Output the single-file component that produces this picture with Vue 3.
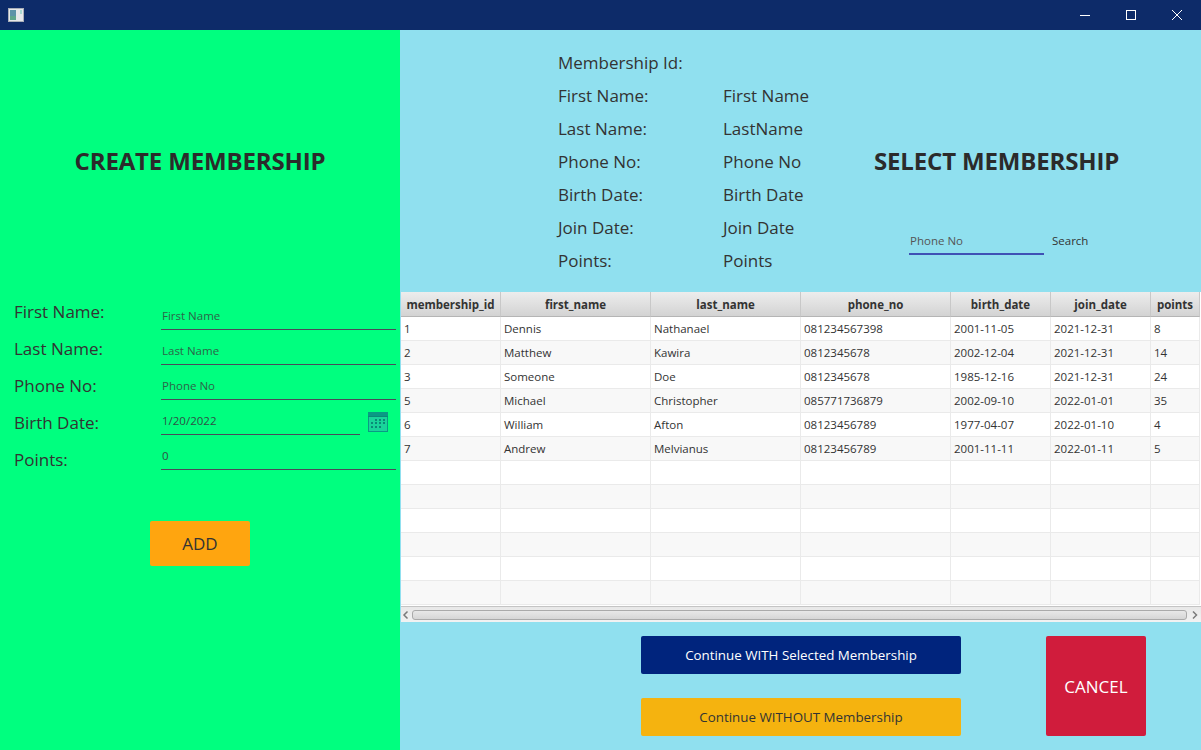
<template>
  <div class="window">
    <div class="titlebar">
      <svg class="app-icon" width="16" height="14" viewBox="0 0 16 14">
        <rect x="0.5" y="0.5" width="15" height="13" fill="#e6e8ea" stroke="#a9afb8" />
        <rect x="2" y="2" width="6" height="10" fill="#5d93a8" />
        <rect x="2" y="8" width="6" height="4" fill="#5fa58c" />
        <rect x="12" y="2" width="2" height="4" fill="#a8d8d0" />
      </svg>
      <div class="win-controls">
        <svg width="12" height="12" viewBox="0 0 12 12"><path d="M1 6.5H11" stroke="#fff" fill="none" /></svg>
        <svg width="12" height="12" viewBox="0 0 12 12"><rect x="1.5" y="1.5" width="9" height="9" stroke="#fff" fill="none" /></svg>
        <svg width="12" height="12" viewBox="0 0 12 12"><path d="M1 1L11 11M11 1L1 11" stroke="#fff" fill="none" /></svg>
      </div>
    </div>

    <div class="content">
      <section class="create">
        <h1 class="heading create-heading">CREATE MEMBERSHIP</h1>
        <div class="form">
          <div class="form-labels">
            <span v-for="l in formLabels" :key="l">{{ l }}</span>
          </div>
          <div class="form-inputs">
            <div v-for="f in formFields" :key="f.text" class="field-row">
              <div class="field" :class="{ prompt: f.prompt }">{{ f.text }}</div>
              <svg v-if="f.date" class="cal" width="20" height="20" viewBox="0 0 20 20">
                <rect x="0" y="0" width="20" height="20" fill="#0a9a84" />
                <rect x="1" y="5" width="18" height="14" fill="#19d49a" />
                <rect x="0" y="4" width="20" height="1" fill="#0a8a78" />
                <g fill="#0a8a78">
                  <rect x="7" y="7" width="2" height="2" /><rect x="11" y="7" width="2" height="2" /><rect x="15" y="7" width="2" height="2" />
                  <rect x="3" y="10" width="2" height="2" /><rect x="7" y="10" width="2" height="2" /><rect x="11" y="10" width="2" height="2" /><rect x="15" y="10" width="2" height="2" />
                  <rect x="3" y="14" width="2" height="2" /><rect x="7" y="14" width="2" height="2" /><rect x="11" y="14" width="2" height="2" />
                </g>
              </svg>
            </div>
          </div>
        </div>
        <button class="add-btn">ADD</button>
      </section>

      <section class="select">
        <div class="select-top">
          <div class="details">
            <template v-for="d in details" :key="d[0]">
              <span>{{ d[0] }}</span>
              <span>{{ d[1] }}</span>
            </template>
          </div>
          <div class="select-side">
            <h1 class="heading">SELECT MEMBERSHIP</h1>
            <div class="search">
              <div class="search-input">Phone No</div>
              <span class="search-btn">Search</span>
            </div>
          </div>
        </div>

        <div class="table-wrap">
          <table>
            <colgroup>
              <col v-for="c in columns" :key="c.name" :style="{ width: c.width + 'px' }" />
            </colgroup>
            <thead>
              <tr>
                <th v-for="c in columns" :key="c.name">{{ c.name }}</th>
              </tr>
            </thead>
            <tbody>
              <tr v-for="(r, i) in rows" :key="i">
                <td v-for="(v, j) in r" :key="j">{{ v }}</td>
              </tr>
            </tbody>
          </table>
          <div class="scrollbar">
            <svg width="11" height="14" viewBox="0 0 11 14"><path d="M6.5 3.5L3 7L6.5 10.5" stroke="#7a7a7a" stroke-width="1.5" fill="none" /></svg>
            <div class="thumb"></div>
            <svg width="14" height="14" viewBox="0 0 14 14"><path d="M6 3.5L9.5 7L6 10.5" stroke="#7a7a7a" stroke-width="1.5" fill="none" /></svg>
          </div>
        </div>

        <div class="actions">
          <div class="continue">
            <button class="btn-with">Continue WITH Selected Membership</button>
            <button class="btn-without">Continue WITHOUT Membership</button>
          </div>
          <button class="btn-cancel">CANCEL</button>
        </div>
      </section>
    </div>
  </div>
</template>

<script setup>
const formLabels = ["First Name:", "Last Name:", "Phone No:", "Birth Date:", "Points:"];
const formFields = [
  { text: "First Name", prompt: true },
  { text: "Last Name", prompt: true },
  { text: "Phone No", prompt: true },
  { text: "1/20/2022", date: true },
  { text: "0" },
];
const details = [
  ["Membership Id:", ""],
  ["First Name:", "First Name"],
  ["Last Name:", "LastName"],
  ["Phone No:", "Phone No"],
  ["Birth Date:", "Birth Date"],
  ["Join Date:", "Join Date"],
  ["Points:", "Points"],
];
const columns = [
  { name: "membership_id", width: 100 },
  { name: "first_name", width: 150 },
  { name: "last_name", width: 150 },
  { name: "phone_no", width: 150 },
  { name: "birth_date", width: 100 },
  { name: "join_date", width: 100 },
  { name: "points", width: 49 },
];
const filled = [
  ["1", "Dennis", "Nathanael", "081234567398", "2001-11-05", "2021-12-31", "8"],
  ["2", "Matthew", "Kawira", "0812345678", "2002-12-04", "2021-12-31", "14"],
  ["3", "Someone", "Doe", "0812345678", "1985-12-16", "2021-12-31", "24"],
  ["5", "Michael", "Christopher", "085771736879", "2002-09-10", "2022-01-01", "35"],
  ["6", "William", "Afton", "08123456789", "1977-04-07", "2022-01-10", "4"],
  ["7", "Andrew", "Melvianus", "08123456789", "2001-11-11", "2022-01-11", "5"],
];
const rows = [...filled, ...Array.from({ length: 6 }, () => Array(7).fill(""))];
</script>

<style>
html,
body {
  margin: 0;
}
</style>

<style scoped>
.window {
  width: 1201px;
  height: 750px;
  display: flex;
  flex-direction: column;
  overflow: hidden;
  font-family: "Open Sans", "Noto Sans", sans-serif;
  color: #333;
}

.titlebar {
  height: 30px;
  background: #0d2b69;
  display: flex;
  align-items: center;
  justify-content: space-between;
  padding-left: 8px;
  box-sizing: border-box;
}
.win-controls {
  display: flex;
  gap: 34px;
  padding-right: 18px;
}

.content {
  flex: 1;
  display: flex;
  min-height: 0;
}

.create {
  width: 400px;
  background: #00ff7f;
  display: flex;
  flex-direction: column;
}
.heading {
  margin: 0;
  font-size: 24px;
  font-weight: 700;
  letter-spacing: -0.15px;
  color: #2b2b2b;
  white-space: nowrap;
}
.create-heading {
  height: 262px;
  line-height: 262px;
  text-align: center;
}
.form {
  display: flex;
  padding-left: 14px;
  padding-right: 4px;
}
.form-labels {
  width: 147px;
  display: flex;
  flex-direction: column;
  gap: 12px;
  padding-top: 7px;
  font-size: 17px;
  line-height: 25px;
}
.form-inputs {
  flex: 1;
  padding-top: 3px;
}
.field-row {
  display: flex;
  height: 35px;
  align-items: flex-end;
}
.field {
  flex: 1;
  height: 35px;
  box-sizing: border-box;
  border-bottom: 1px solid #4a4a5a;
  padding: 13px 0 0 1px;
  font-size: 11.5px;
  line-height: 16px;
  color: #2f4f45;
}
.field.prompt {
  color: #2c6548;
}
.cal {
  margin: 0 8px 3px 8px;
}
.add-btn {
  width: 100px;
  height: 45px;
  margin: 49px 0 0 150px;
  border: none;
  border-radius: 2px;
  padding: 0;
  background: #ffa50f;
  font-family: inherit;
  font-size: 17px;
  color: #333;
}

.select {
  flex: 1;
  background: #90e0ef;
  display: flex;
  flex-direction: column;
  min-width: 0;
}
.select-top {
  height: 262px;
  display: flex;
}
.details {
  width: 315px;
  margin-left: 158px;
  padding-top: 16px;
  display: grid;
  grid-template-columns: 165px 1fr;
  grid-auto-rows: 33px;
  font-size: 17px;
  line-height: 33px;
  white-space: nowrap;
}
.select-side {
  flex: 1;
  padding: 0 0 0 1px;
}
.select-side .heading {
  line-height: 32px;
  padding-top: 115px;
}
.search {
  display: flex;
  align-items: flex-end;
  margin: 52px 0 0 35px;
}
.search-input {
  width: 135px;
  height: 26px;
  box-sizing: border-box;
  border-bottom: 2px solid #3f51b5;
  padding-left: 1px;
  font-size: 11.5px;
  line-height: 24px;
  color: #555;
}
.search-btn {
  margin: 0 0 6px 8px;
  font-size: 11.5px;
  line-height: 16px;
  color: #333;
}

.table-wrap {
  height: 330px;
  margin-left: 1px;
  background: #fff;
  display: flex;
  flex-direction: column;
  overflow: hidden;
}
table {
  width: 799px;
  table-layout: fixed;
  border-collapse: separate;
  border-spacing: 0;
  font-size: 11.5px;
}
th {
  height: 25px;
  box-sizing: border-box;
  padding: 0;
  background: linear-gradient(#ededed, #d3d3d3);
  border-right: 1px solid #c8c8c8;
  border-bottom: 1px solid #b5b5b5;
  font-weight: 700;
  color: #333;
  white-space: nowrap;
  text-align: center;
}
td {
  height: 24px;
  box-sizing: border-box;
  padding: 0 0 0 3px;
  border-right: 1px solid #eaeaea;
  border-bottom: 1px solid #eaeaea;
  color: #333;
  white-space: nowrap;
}
tbody tr:nth-child(even) td {
  background: #f8f8f8;
}
.scrollbar {
  margin-top: auto;
  height: 15px;
  display: flex;
  align-items: center;
  background: linear-gradient(#e8e8e8, #f2f2f2);
  border-top: 1px solid #c4c4c4;
}
.thumb {
  flex: 1;
  height: 8px;
  background: linear-gradient(#e8e8e8, #d6d6d6);
  border: 1px solid #aaa;
  border-radius: 3px;
}

.actions {
  flex: 1;
  display: flex;
  padding: 14px 0 0 241px;
}
.actions button {
  border: none;
  border-radius: 2px;
  padding: 0;
  font-family: inherit;
}
.continue {
  display: flex;
  flex-direction: column;
  gap: 24px;
}
.continue button {
  width: 320px;
  height: 38px;
  font-size: 13.35px;
}
.btn-with {
  background: #00247d;
  color: #fff;
}
.btn-without {
  background: #f5b30f;
  color: #333;
}
.btn-cancel {
  width: 100px;
  height: 100px;
  margin-left: 85px;
  background: #d01c3c;
  color: #fff;
  font-size: 17px;
}
</style>
